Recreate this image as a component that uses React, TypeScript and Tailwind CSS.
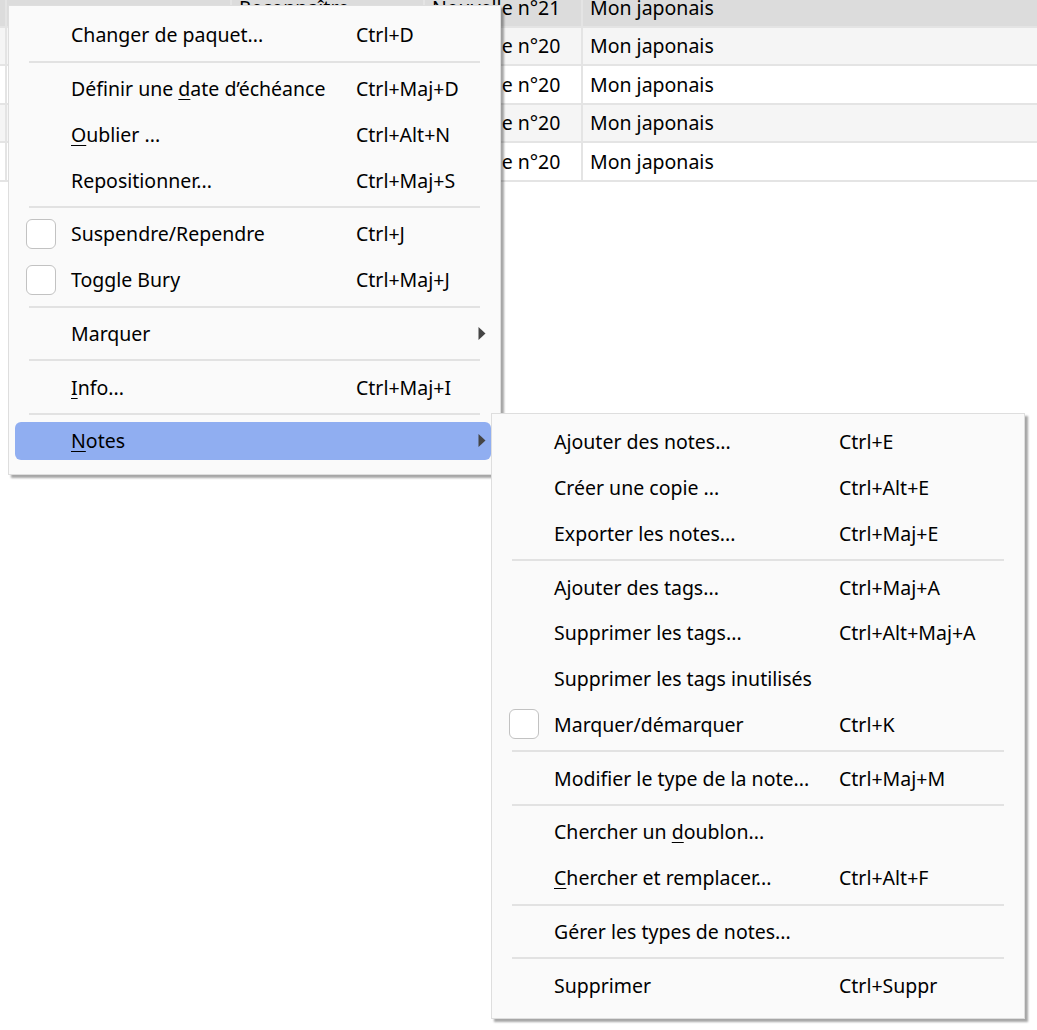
import React from "react";

type Entry =
  | { kind: "sep" }
  | {
      kind: "item";
      label: React.ReactNode;
      shortcut?: string;
      check?: boolean;
      arrow?: boolean;
      active?: boolean;
    };

const U = ({ children }: { children: React.ReactNode }) => (
  <span className="underline decoration-1 underline-offset-[3px]">{children}</span>
);

const mainMenu: Entry[] = [
  { kind: "item", label: "Changer de paquet...", shortcut: "Ctrl+D" },
  { kind: "sep" },
  {
    kind: "item",
    label: (
      <>
        Définir une <U>d</U>ate d’échéance
      </>
    ),
    shortcut: "Ctrl+Maj+D",
  },
  {
    kind: "item",
    label: (
      <>
        <U>O</U>ublier ...
      </>
    ),
    shortcut: "Ctrl+Alt+N",
  },
  { kind: "item", label: "Repositionner...", shortcut: "Ctrl+Maj+S" },
  { kind: "sep" },
  { kind: "item", label: "Suspendre/Rependre", shortcut: "Ctrl+J", check: true },
  { kind: "item", label: "Toggle Bury", shortcut: "Ctrl+Maj+J", check: true },
  { kind: "sep" },
  { kind: "item", label: "Marquer", arrow: true },
  { kind: "sep" },
  {
    kind: "item",
    label: (
      <>
        <U>I</U>nfo...
      </>
    ),
    shortcut: "Ctrl+Maj+I",
  },
  { kind: "sep" },
  {
    kind: "item",
    label: (
      <>
        <U>N</U>otes
      </>
    ),
    arrow: true,
    active: true,
  },
];

const notesMenu: Entry[] = [
  { kind: "item", label: "Ajouter des notes...", shortcut: "Ctrl+E" },
  { kind: "item", label: "Créer une copie ...", shortcut: "Ctrl+Alt+E" },
  { kind: "item", label: "Exporter les notes...", shortcut: "Ctrl+Maj+E" },
  { kind: "sep" },
  { kind: "item", label: "Ajouter des tags...", shortcut: "Ctrl+Maj+A" },
  { kind: "item", label: "Supprimer les tags...", shortcut: "Ctrl+Alt+Maj+A" },
  { kind: "item", label: "Supprimer les tags inutilisés" },
  { kind: "item", label: "Marquer/démarquer", shortcut: "Ctrl+K", check: true },
  { kind: "sep" },
  { kind: "item", label: "Modifier le type de la note...", shortcut: "Ctrl+Maj+M" },
  { kind: "sep" },
  {
    kind: "item",
    label: (
      <>
        Chercher un <U>d</U>oublon...
      </>
    ),
  },
  {
    kind: "item",
    label: (
      <>
        <U>C</U>hercher et remplacer...
      </>
    ),
    shortcut: "Ctrl+Alt+F",
  },
  { kind: "sep" },
  { kind: "item", label: "Gérer les types de notes..." },
  { kind: "sep" },
  { kind: "item", label: "Supprimer", shortcut: "Ctrl+Suppr" },
];

function MenuList({ entries }: { entries: Entry[] }) {
  return (
    <>
      {entries.map((e, i) =>
        e.kind === "sep" ? (
          <div key={i} className="h-[8px] mx-[20px] flex items-center">
            <div className="h-[2px] w-full bg-[#e2e2e2]" />
          </div>
        ) : (
          <div key={i} className="h-[45.75px] pl-[6px] pr-[9px] py-[4px]">
            <div
              className={
                "h-full rounded-[6px] flex items-center " +
                (e.active ? "bg-[#90aef1]" : "")
              }
            >
              <div className="w-[56px] shrink-0 pl-[11px] flex items-center">
                {e.check && (
                  <div className="w-[30px] h-[30px] rounded-[6px] border-[1.5px] border-[#c2c2c2] bg-white" />
                )}
              </div>
              <div className="w-[285px] shrink-0 whitespace-nowrap">{e.label}</div>
              <div className="flex-1 whitespace-nowrap">{e.shortcut}</div>
              {e.arrow && (
                <svg width="8" height="13" viewBox="0 0 8 13" className="mr-[5px]">
                  <path d="M0.5 0 L7.5 6.5 L0.5 13 Z" fill="#454545" />
                </svg>
              )}
            </div>
          </div>
        )
      )}
    </>
  );
}

const rows = [
  { a: "Reconnaître", b: "Nouvelle n°21", bg: "bg-[#dcdcdc]" },
  { a: "Reconnaître", b: "Nouvelle n°20", bg: "bg-[#f5f5f5]" },
  { a: "Reconnaître", b: "Nouvelle n°20", bg: "bg-white" },
  { a: "Reconnaître", b: "Nouvelle n°20", bg: "bg-[#f5f5f5]" },
  { a: "Reconnaître", b: "Nouvelle n°20", bg: "bg-white" },
];

export default function App() {
  return (
    <div
      className="relative w-[1037px] h-[1030px] overflow-hidden bg-white text-[19.5px] text-black"
      style={{ fontFamily: '"Noto Sans", "Open Sans", sans-serif' }}
    >
      {/* card browser table, scrolled so the first row is partly hidden */}
      <div className="-mt-[11px]">
        {rows.map((r, i) => (
          <div
            key={i}
            className={"flex h-[38.5px] border-b-2 border-[#e4e4e4] " + r.bg}
          >
            <div className="w-[7px] shrink-0 border-r-2 border-[#e4e4e4]" />
            <div className="w-[225px] shrink-0 border-r-2 border-[#e4e4e4]" />
            <div className="w-[193px] shrink-0 border-r-2 border-[#e4e4e4] pl-[7px] flex items-center whitespace-nowrap">
              {r.a}
            </div>
            <div className="w-[158px] shrink-0 border-r-2 border-[#e4e4e4] pl-[7px] flex items-center whitespace-nowrap">
              {r.b}
            </div>
            <div className="flex-1 pl-[7px] flex items-center whitespace-nowrap">
              Mon japonais
            </div>
          </div>
        ))}
      </div>

      {/* context menu */}
      <div className="absolute left-[8px] top-[5px] w-[493px] bg-[#fafafa] border border-[#dedede] pt-[6px] pb-[10px] shadow-[3px_3px_2px_rgba(0,0,0,0.35)]">
        <MenuList entries={mainMenu} />
      </div>

      {/* Notes submenu */}
      <div className="absolute left-[491px] top-[413px] w-[534px] bg-[#fafafa] border border-[#dedede] pt-[5px] pb-[10px] shadow-[3px_3px_2px_rgba(0,0,0,0.35)]">
        <MenuList entries={notesMenu} />
      </div>
    </div>
  );
}
